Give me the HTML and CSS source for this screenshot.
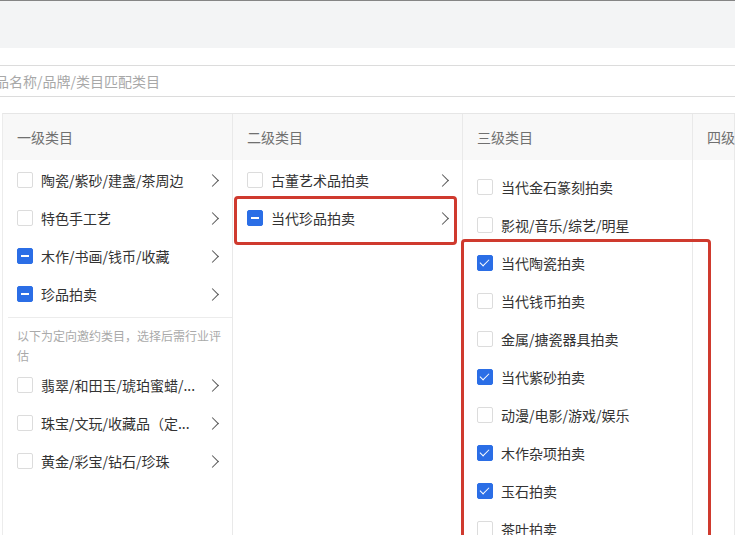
FILE: index.html
```html
<!DOCTYPE html>
<html lang="zh-CN">
  <head>
    <meta charset="utf-8">
    <title>选择类目</title>
    <link rel="stylesheet" href="styles.css">
  </head>
  <body>
    <div class="topbar"></div>
    <div class="search">
      <span class="placeholder">输入商品名称/品牌/类目匹配类目</span>
    </div>
    <div class="panel">
      <div class="col">
        <div class="col-head">一级类目</div>
        <div class="col-list">
          <div class="item"><span class="box"></span><span class="label">陶瓷/紫砂/建盏/茶周边</span><span class="arrow"></span></div>
          <div class="item"><span class="box"></span><span class="label">特色手工艺</span><span class="arrow"></span></div>
          <div class="item"><span class="box half"></span><span class="label">木作/书画/钱币/收藏</span><span class="arrow"></span></div>
          <div class="item"><span class="box half"></span><span class="label">珍品拍卖</span><span class="arrow"></span></div>
          <div class="divider"></div>
          <div class="note">以下为定向邀约类目，选择后需行业评估</div>
          <div class="item"><span class="box"></span><span class="label" title="翡翠/和田玉/琥珀蜜蜡/菩提">翡翠/和田玉/琥珀蜜蜡/...</span><span class="arrow"></span></div>
          <div class="item"><span class="box"></span><span class="label" title="珠宝/文玩/收藏品（定向邀约）">珠宝/文玩/收藏品（定...</span><span class="arrow"></span></div>
          <div class="item"><span class="box"></span><span class="label">黄金/彩宝/钻石/珍珠</span><span class="arrow"></span></div>
        </div>
      </div>
      <div class="col">
        <div class="col-head">二级类目</div>
        <div class="col-list">
          <div class="item"><span class="box"></span><span class="label">古董艺术品拍卖</span><span class="arrow"></span></div>
          <div class="item"><span class="box half"></span><span class="label">当代珍品拍卖</span><span class="arrow"></span></div>
        </div>
        <div class="mark mark-second"></div>
      </div>
      <div class="col">
        <div class="col-head">三级类目</div>
        <div class="col-list leaf">
          <div class="item"><span class="box"></span><span class="label">当代金石篆刻拍卖</span></div>
          <div class="item"><span class="box"></span><span class="label">影视/音乐/综艺/明星</span></div>
          <div class="item"><span class="box on"></span><span class="label">当代陶瓷拍卖</span></div>
          <div class="item"><span class="box"></span><span class="label">当代钱币拍卖</span></div>
          <div class="item"><span class="box"></span><span class="label">金属/搪瓷器具拍卖</span></div>
          <div class="item"><span class="box on"></span><span class="label">当代紫砂拍卖</span></div>
          <div class="item"><span class="box"></span><span class="label">动漫/电影/游戏/娱乐</span></div>
          <div class="item"><span class="box on"></span><span class="label">木作杂项拍卖</span></div>
          <div class="item"><span class="box on"></span><span class="label">玉石拍卖</span></div>
          <div class="item"><span class="box"></span><span class="label">茶叶拍卖</span></div>
        </div>
        <div class="mark mark-third"></div>
      </div>
      <div class="col">
        <div class="col-head">四级类目</div>
      </div>
    </div>
  </body>
</html>
```

FILE: styles.css
```css
body {
  margin: 0;
  height: 536px;
  overflow: hidden;
  background-color: #fff;
  font-family: "Noto Sans CJK SC", "Noto Sans", sans-serif;
  font-size: 14px;
  color: #333;
}
.topbar {
  height: 47px;
  border-top: 1px solid #858585;
  background-color: #f3f4f5;
}
.search {
  margin-top: 17px;
  margin-left: -60px;
  height: 30px;
  padding-left: 13px;
  display: flex;
  align-items: center;
  border-top: 1px solid #dcdcdc;
  border-bottom: 1px solid #dcdcdc;
}
.placeholder {
  color: #a8a8a8;
  white-space: nowrap;
}
.panel {
  margin-top: 16px;
  margin-left: 2px;
  display: grid;
  grid-template-columns: 230px 230px 230px 1fr;
  border-top: 1px solid #e6e6e6;
  border-left: 1px solid #ececec;
  height: 421px;
  overflow: hidden;
}
.col {
  position: relative;
  border-right: 1px solid #e9e9e9;
  min-width: 0;
}
.col-head {
  height: 46px;
  line-height: 46px;
  padding-left: 14px;
  color: #707070;
  background-color: #f8f8f8;
  white-space: nowrap;
}
.col-list {
  padding-top: 1px;
}
.col-list.leaf {
  padding-top: 8px;
}
.item {
  height: 38px;
  display: flex;
  align-items: center;
  padding: 0 13px 0 14px;
}
.box {
  flex: none;
  width: 14px;
  height: 14px;
  border: 1px solid #dcdcdc;
  border-radius: 2px;
  margin-right: 8px;
  position: relative;
  background-color: #fff;
}
.box.half, .box.on {
  border-color: #2b6ee6;
  background-color: #2b6ee6;
}
.box.half::after {
  content: "";
  position: absolute;
  left: 3px;
  top: 6px;
  width: 8px;
  height: 2px;
  background-color: #fff;
}
.box.on::after {
  content: "";
  position: absolute;
  left: 4px;
  top: 1px;
  width: 4px;
  height: 8px;
  border-right: 1.5px solid #fff;
  border-bottom: 1.5px solid #fff;
  transform: rotate(45deg);
}
.label {
  flex: 1;
  min-width: 0;
  white-space: nowrap;
  overflow: hidden;
}
.arrow {
  flex: none;
  width: 8px;
  height: 8px;
  margin-left: 12px;
  margin-right: 2px;
  border-top: 1.3px solid #555;
  border-right: 1.3px solid #555;
  transform: rotate(45deg);
}
.divider {
  margin: 4px 0 0 5px;
  border-top: 1px solid #ececec;
}
.note {
  margin-top: 8px;
  padding: 0 10px 0 14px;
  font-size: 12px;
  line-height: 20px;
  color: #aaa;
}
.mark {
  position: absolute;
  border: 3px solid #cf3a2e;
  border-radius: 4px;
}
.mark-second {
  left: 1px;
  top: 82px;
  width: 217px;
  height: 43px;
}
.mark-third {
  left: -2px;
  top: 125px;
  width: 244px;
  height: 420px;
}
```
